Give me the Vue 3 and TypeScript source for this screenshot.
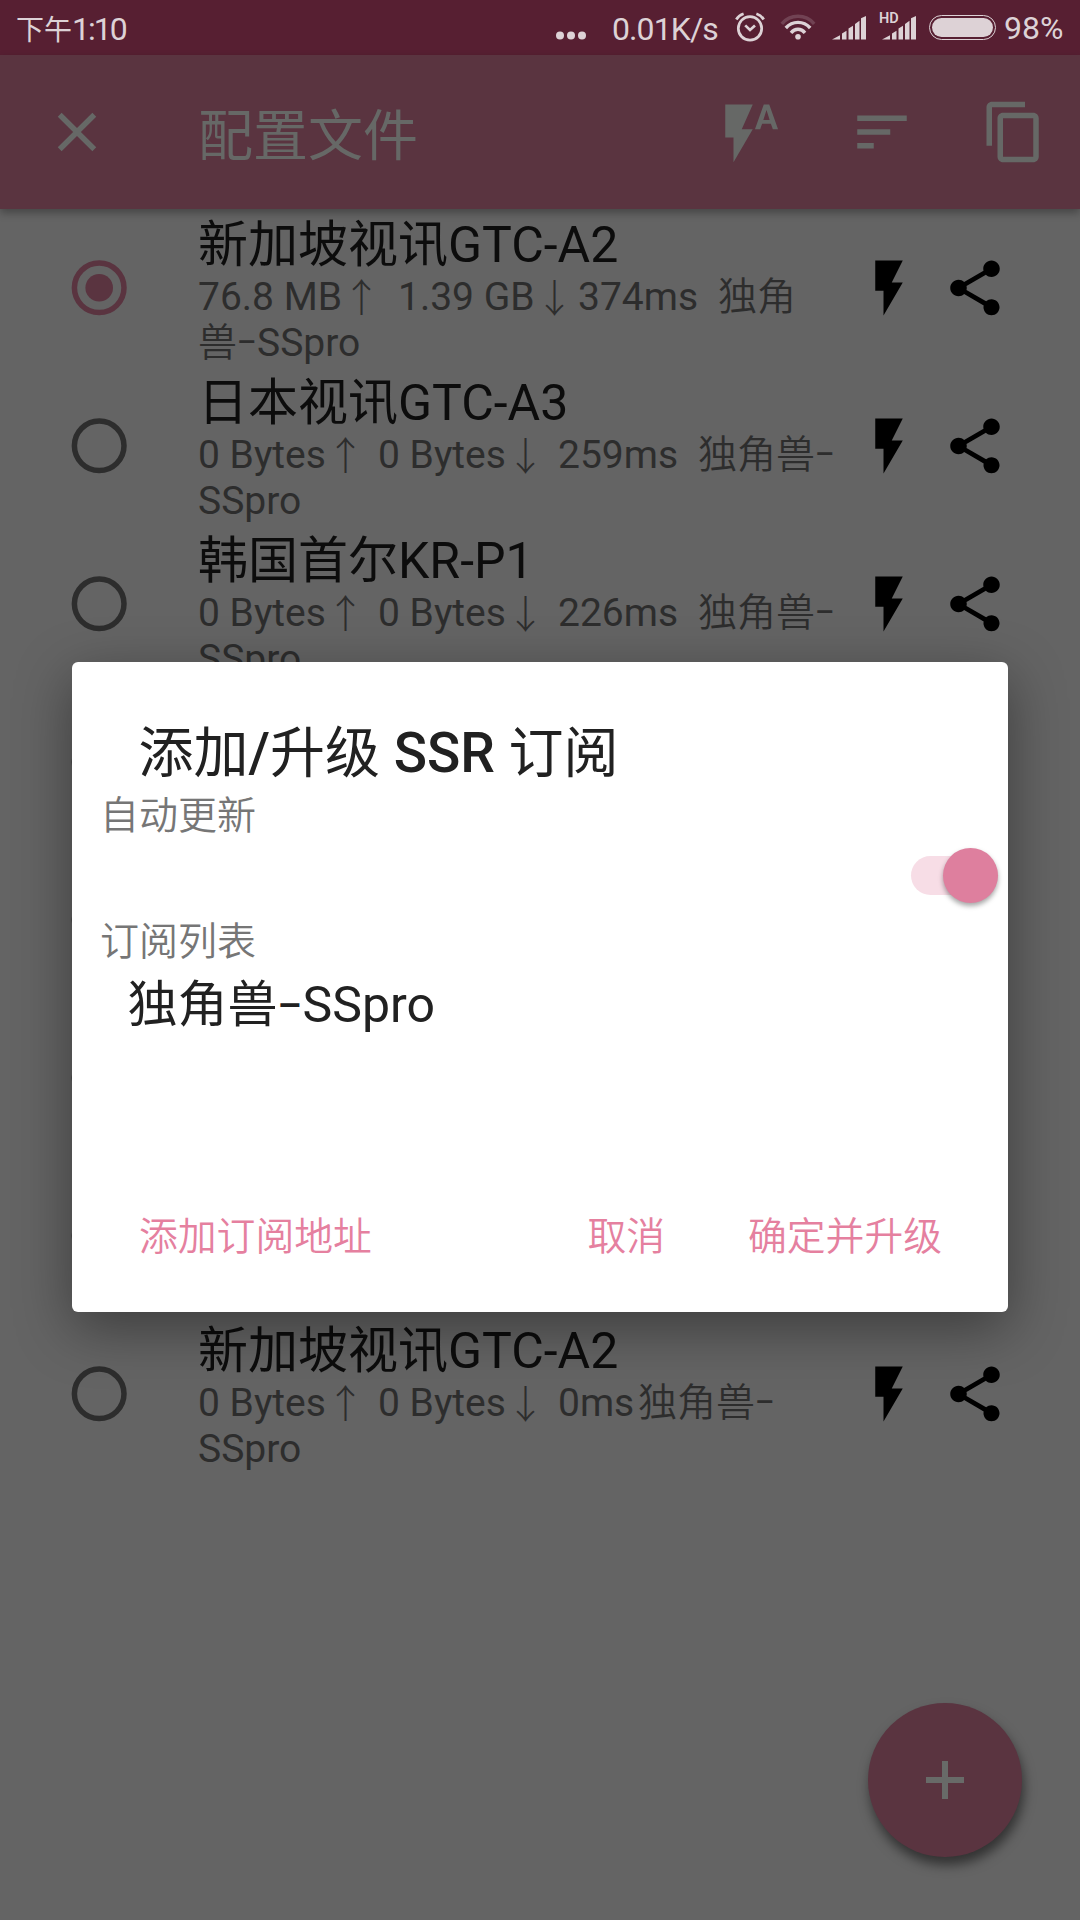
<script setup lang="ts">
interface Segment {
  text: string
  width?: number
  kind?: 'arrow' | 'dash' | 'cjk'
}

interface Profile {
  id: number
  name: string
  selected: boolean
  lines: Segment[][]
}

const idleTraffic: Segment[] = [
  { text: '0 Bytes', width: 128 },
  { text: '↑', kind: 'arrow', width: 52 },
  { text: '0 Bytes', width: 128 },
  { text: '↓', kind: 'arrow', width: 52 },
]

const idleLines = (delay: string, width: number): Segment[][] => [
  [
    ...idleTraffic,
    { text: delay, width },
    { text: '独角兽', kind: 'cjk', width: 117 },
    { text: '–', kind: 'dash', width: 20 },
  ],
  [{ text: 'SSpro' }],
]

const profiles: Profile[] = [
  {
    id: 1,
    name: '新加坡视讯GTC-A2',
    selected: true,
    lines: [
      [
        { text: '76.8 MB', width: 144 },
        { text: '↑', kind: 'arrow', width: 56 },
        { text: '1.39 GB', width: 137 },
        { text: '↓', kind: 'arrow', width: 43 },
        { text: '374ms', width: 140 },
        { text: '独角', kind: 'cjk', width: 79 },
      ],
      [
        { text: '兽', kind: 'cjk', width: 39 },
        { text: '–', kind: 'dash', width: 20 },
        { text: 'SSpro' },
      ],
    ],
  },
  { id: 2, name: '日本视讯GTC-A3', selected: false, lines: idleLines('259ms', 140) },
  { id: 3, name: '韩国首尔KR-P1', selected: false, lines: idleLines('226ms', 140) },
  { id: 4, name: '', selected: false, lines: [] },
  { id: 5, name: '', selected: false, lines: [] },
  { id: 6, name: '', selected: false, lines: [] },
  { id: 7, name: '', selected: false, lines: [] },
  { id: 8, name: '新加坡视讯GTC-A2', selected: false, lines: idleLines('0ms', 80) },
]

const segmentStyle = (s: Segment) => (s.width ? { width: `${s.width}px` } : {})
</script>

<template>
  <div class="screen">
    <header class="status">
      <span class="clock"><span class="clock-cjk">下午</span>1:10</span>
      <svg class="dots" width="32" height="55" viewBox="0 0 32 55">
        <circle cx="5" cy="35.5" r="4" /><circle cx="16" cy="35.5" r="4" /><circle cx="27" cy="35.5" r="4" />
      </svg>
      <span class="speed">0.01K/s</span>
      <svg class="alarm" width="30" height="55" viewBox="0 0 30 55" fill="none" stroke-width="2.7">
        <circle cx="15" cy="28.4" r="11.7" />
        <path d="M10.2 25.4l4.8 4.6 5-4.6" />
        <path d="M1.3 19.5Q3.6 15.4 8.6 13.8M28.7 19.5Q26.4 15.4 21.4 13.8" />
      </svg>
      <svg class="wifi" width="36" height="55" viewBox="0 0 36 55" fill="none" stroke-width="3.4">
        <path class="dim" d="M1.8 23.8Q8.2 16.300 18 16.300T34.2 23.8" />
        <path d="M5.8 28Q10.8 22.4 18 22.4T30.2 28" />
        <path d="M11 32.8Q14 29.300 18 29.300T25 32.8" />
        <circle class="fill" cx="18" cy="36.7" r="2.8" />
      </svg>
      <svg class="signal" width="34" height="55" viewBox="0 0 34 55">
        <path d="M0 39.6L8 35.2V39.6zM10 39.6V33.500L14.500 30.700V39.6zM16.500 39.6V28.600L21 25.800V39.6zM23 39.6V24L27.500 20.800V39.6zM29 39.6V18.300L34 16V39.6z" />
      </svg>
      <span class="hd">
        <span class="hd-text">HD</span>
        <svg width="34" height="55" viewBox="0 0 34 55">
          <path d="M0 39.6L8 35.2V39.6zM10 39.6V33.500L14.500 30.700V39.6zM16.500 39.6V28.600L21 25.800V39.6zM23 39.6V24L27.500 20.800V39.6zM29 39.6V18.300L34 16V39.6z" />
        </svg>
      </span>
      <span class="battery"><span class="battery-fill"></span></span>
      <span class="percent">98%</span>
    </header>

    <div class="toolbar">
      <svg class="icon close" viewBox="0 0 24 24"><path d="M19 6.410L17.590 5 12 10.590 6.410 5 5 6.410 10.590 12 5 17.590 6.410 19 12 13.410 17.590 19 19 17.590 13.410 12z" /></svg>
      <h1>配置文件</h1>
      <div class="actions">
        <svg class="icon" viewBox="0 0 24 24"><path d="M3 2v12h3v9l7-12H9l4-9H3zm16 0h-2l-3.200 9h1.900l.7-2h3.200l.7 2h1.900L19 2zm-2.150 5.650L18 4l1.150 3.650h-2.300z" /></svg>
        <svg class="icon" viewBox="0 0 24 24"><path d="M3 18h6v-2H3v2zM3 6v2h18V6H3zm0 7h12v-2H3v2z" /></svg>
        <svg class="icon" viewBox="0 0 24 24"><path d="M16 1H4c-1.100 0-2 .9-2 2v14h2V3h12V1zm3 4H8c-1.100 0-2 .9-2 2v14c0 1.100.9 2 2 2h11c1.100 0 2-.9 2-2V7c0-1.100-.9-2-2-2zm0 16H8V7h11v14z" /></svg>
      </div>
    </div>

    <main class="list">
      <div v-for="p in profiles" :key="p.id" class="row">
        <svg class="radio" :class="{ on: p.selected }" viewBox="0 0 56 56">
          <circle class="ring" cx="28.200" cy="27.800" r="24.800" />
          <circle v-if="p.selected" class="core" cx="28.200" cy="27.800" r="13.800" />
        </svg>
        <div class="info">
          <div class="name">{{ p.name }}</div>
          <div v-for="(line, i) in p.lines" :key="i" class="line">
            <span v-for="(s, j) in line" :key="j" :class="s.kind" :style="segmentStyle(s)">{{ s.text }}</span>
          </div>
        </div>
        <svg class="icon" viewBox="0 0 24 24"><path d="M7 2v11h3v9l7-12h-4l4-8z" /></svg>
        <svg class="icon share" viewBox="0 0 24 24"><path d="M18 16.080c-.76 0-1.440.3-1.960.77L8.910 12.700c.05-.23.09-.46.09-.7s-.04-.47-.09-.7l7.050-4.110c.54.5 1.250.81 2.040.81 1.660 0 3-1.340 3-3s-1.340-3-3-3-3 1.340-3 3c0 .24.04.47.09.7L8.040 9.810C7.500 9.310 6.790 9 6 9c-1.660 0-3 1.340-3 3s1.340 3 3 3c.79 0 1.500-.31 2.040-.81l7.120 4.160c-.05.21-.08.43-.08.65 0 1.610 1.310 2.920 2.920 2.920 1.610 0 2.920-1.310 2.920-2.920s-1.310-2.920-2.920-2.920z" /></svg>
      </div>
    </main>

    <button class="fab" aria-label="+"><span class="plus"></span></button>

    <section class="dialog">
      <h2><span>添加</span><b class="slash">/</b><span>升级</span> <b>SSR</b> <span>订阅</span></h2>
      <p class="label">自动更新</p>
      <div class="switch-row"><span class="switch"><span class="thumb"></span></span></div>
      <p class="label">订阅列表</p>
      <p class="sub">独角兽<span class="sub-dash">–</span>SSpro</p>
      <footer>
        <button>添加订阅地址</button>
        <span class="spacer"></span>
        <button>取消</button>
        <button class="ok">确定并升级</button>
      </footer>
    </section>
  </div>
</template>

<style>
body {
  margin: 0;
}
</style>

<style scoped>
.screen {
  position: relative;
  width: 1080px;
  height: 1920px;
  overflow: hidden;
  background: #646464;
  font-family: Roboto, 'Noto Sans CJK SC', sans-serif;
  display: flex;
  flex-direction: column;
}
h1, h2, p {
  margin: 0;
  font-weight: 400;
}
button {
  border: 0;
  padding: 0;
  background: none;
  font: inherit;
  color: inherit;
}
svg {
  flex: none;
  display: block;
}
.status {
  height: 55px;
  flex: none;
  display: flex;
  background: #571f32;
  color: #ddd2d6;
  font-size: 32px;
  line-height: 58px;
  white-space: nowrap;
}
.status svg {
  fill: #ddd2d6;
}
.status .alarm, .status .wifi {
  fill: none;
  stroke: #ddd2d6;
}
.status .wifi .fill {
  fill: #ddd2d6;
  stroke: none;
}
.status .wifi .dim {
  opacity: 0.2;
}
.clock {
  width: 539px;
  margin-left: 16px;
  letter-spacing: -2px;
}
.clock-cjk {
  font-size: 28px;
  letter-spacing: 0;
}
.dots {
  margin-right: 25px;
}
.speed {
  width: 108px;
  letter-spacing: -0.900px;
}
.alarm {
  margin-left: 15px;
}
.wifi {
  margin-left: 15px;
}
.signal {
  margin-left: 16px;
}
.hd {
  position: relative;
  margin-left: 16px;
}
.hd-text {
  position: absolute;
  left: -3px;
  top: 11px;
  font-size: 14.500px;
  line-height: 16px;
  font-weight: 600;
}
.battery {
  box-sizing: border-box;
  flex: none;
  width: 67px;
  height: 25px;
  margin: 15px 0 0 13px;
  padding: 2px;
  border: 1.500px solid #ddd2d6;
  border-radius: 13px;
  display: flex;
}
.battery-fill {
  flex: 1;
  border-radius: 10px;
  background: #ddd2d6;
}
.percent {
  margin-left: 8px;
  font-size: 32px;
  line-height: 57px;
}
.toolbar {
  position: relative;
  height: 154px;
  flex: none;
  display: flex;
  align-items: center;
  background: #5a3440;
  box-shadow: 0 4px 8px rgba(0, 0, 0, 0.3);
  color: #666866;
}
.icon {
  width: 66px;
  height: 66px;
  fill: #000;
}
.toolbar .icon {
  fill: #666866;
}
.close {
  margin-left: 44px;
}
h1 {
  margin: 8px 0 0 88px;
  font-size: 55px;
  line-height: 72px;
}
.actions {
  margin-left: auto;
  margin-right: 33px;
  display: flex;
  gap: 66px;
}
.list {
  display: flex;
  flex-direction: column;
}
.row {
  height: 158px;
  display: flex;
  align-items: center;
}
.radio {
  width: 56px;
  height: 56px;
  margin-left: 71px;
}
.ring {
  fill: none;
  stroke: #2d2d2d;
  stroke-width: 5.500px;
}
.on .ring {
  stroke: #5a3440;
}
.core {
  fill: #5a3440;
}
.info {
  align-self: flex-start;
  width: 658px;
  margin-left: 71px;
  padding-top: 7px;
}
.name {
  height: 58px;
  font-size: 50px;
  line-height: 59px;
  color: #0c0c0c;
}
.line {
  display: flex;
  height: 46px;
  font-size: 39px;
  line-height: 46px;
  color: #2d2d2d;
  white-space: nowrap;
}
.cjk {
  font-weight: 350;
}
.arrow {
  font-weight: 300;
  line-height: 51px;
}
.dash {
  font-size: 30px;
  font-weight: 500;
  line-height: 43px;
}
.share {
  margin-left: 20px;
}
.fab {
  position: absolute;
  left: 868px;
  top: 1703px;
  width: 154px;
  height: 154px;
  border-radius: 50%;
  background: #5a3440;
  box-shadow: 2px 8px 12px rgba(0, 0, 0, 0.5);
  display: flex;
  align-items: center;
  justify-content: center;
}
.plus {
  width: 38px;
  height: 38px;
  background:
    linear-gradient(#686a68, #686a68) center / 38px 6px no-repeat,
    linear-gradient(#686a68, #686a68) center / 6px 38px no-repeat;
}
.dialog {
  position: absolute;
  left: 72px;
  top: 662px;
  box-sizing: border-box;
  width: 936px;
  height: 650px;
  padding-top: 55px;
  border-radius: 6px;
  background: #fff;
  box-shadow: 0 16px 56px rgba(0, 0, 0, 0.4);
  display: flex;
  flex-direction: column;
}
h2 {
  height: 76px;
  padding-left: 66.500px;
  font-size: 55px;
  line-height: 72px;
  color: #212121;
  white-space: pre;
}
h2 b {
  font-weight: 500;
}
.label {
  height: 46px;
  padding-left: 28px;
  font-size: 39px;
  font-weight: 350;
  line-height: 46px;
  color: #767676;
}
.switch-row {
  height: 80px;
  box-sizing: border-box;
  padding-bottom: 8px;
  display: flex;
  justify-content: flex-end;
  align-items: center;
}
.switch {
  display: flex;
  align-items: center;
  width: 87px;
  height: 39px;
  margin-right: 10px;
  border-radius: 20px;
  background: #f7dde6;
}
.thumb {
  flex: none;
  width: 55px;
  height: 55px;
  margin-left: 32px;
  border-radius: 50%;
  background: #de7f9e;
  box-shadow: 0 3px 5px rgba(0, 0, 0, 0.35);
}
.sub {
  height: 72px;
  padding-left: 55.500px;
  font-size: 50px;
  line-height: 81px;
  color: #212121;
}
.sub-dash {
  display: inline-block;
  width: 25px;
  font-size: 38px;
  font-weight: 500;
  line-height: 40px;
  vertical-align: 3px;
}
footer {
  display: flex;
  margin-top: auto;
  padding: 0 66px 52px 67px;
  font-size: 38.800px;
  font-weight: 350;
  line-height: 46px;
  color: #e5809f;
}
.spacer {
  flex: 1;
}
.ok {
  margin-left: 83px;
}
</style>
